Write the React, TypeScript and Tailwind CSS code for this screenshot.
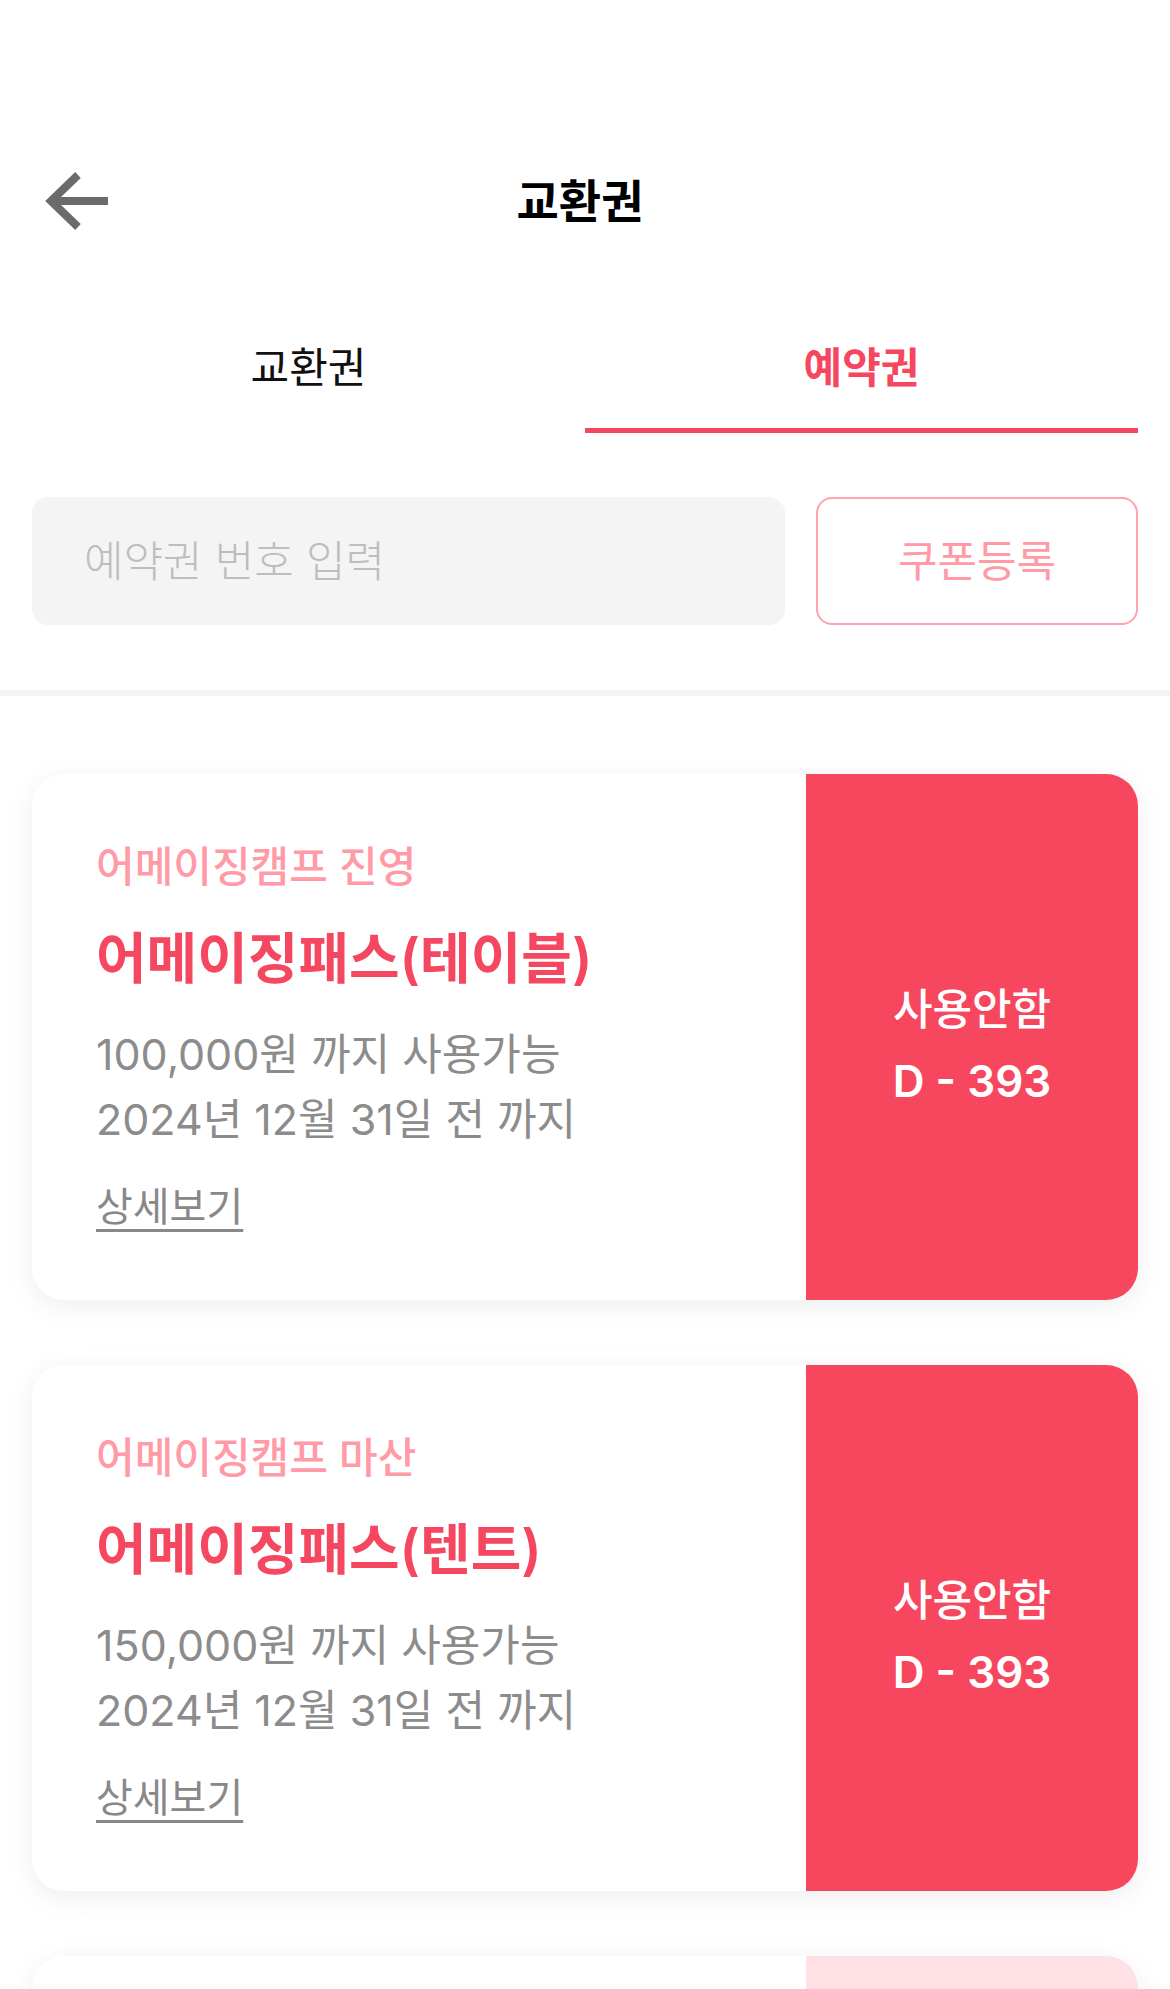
import React from "react";

const FONT = '"Inter", "Noto Sans CJK KR", "Noto Sans", sans-serif';

type Voucher = {
  place: string;
  name: string;
  amount: string;
  until: string;
  status: string;
  dday: string;
  faded?: boolean;
};

const vouchers: Voucher[] = [
  {
    place: "어메이징캠프 진영",
    name: "어메이징패스(테이블)",
    amount: "100,000원 까지 사용가능",
    until: "2024년 12월 31일 전 까지",
    status: "사용안함",
    dday: "D - 393",
  },
  {
    place: "어메이징캠프 마산",
    name: "어메이징패스(텐트)",
    amount: "150,000원 까지 사용가능",
    until: "2024년 12월 31일 전 까지",
    status: "사용안함",
    dday: "D - 393",
  },
];

function VoucherCard({ v }: { v: Voucher }) {
  return (
    <div className="flex h-[526px] shrink-0 overflow-hidden rounded-[32px] bg-white shadow-[0_6px_28px_rgba(0,0,0,0.07)]">
      <div className="flex flex-1 flex-col pl-[64px] pt-[69px]">
        <div className="text-[42px] leading-[48px] font-medium text-[#ff9aa6]">{v.place}</div>
        <div className="mt-[37px] text-[55px] leading-[60px] font-semibold text-[#f5475f]">{v.name}</div>
        <div className="mt-[34px] text-[43px] leading-[65px] text-[#8c8c8c]">
          <div>{v.amount}</div>
          <div>{v.until}</div>
        </div>
        <div className="mt-[31px] text-[40px] leading-[48px] text-[#888888] underline decoration-[3px] underline-offset-[8px]">
          상세보기
        </div>
      </div>
      <div className="flex w-[332px] flex-col items-center justify-center bg-[#f6475f] pt-[16px] text-white">
        <div className="text-[43px] leading-[72px] font-medium">{v.status}</div>
        <div className="text-[44px] leading-[72px] font-semibold">{v.dday}</div>
      </div>
    </div>
  );
}

function FadedCard() {
  return (
    <div className="flex h-[526px] shrink-0 overflow-hidden rounded-[32px] bg-white shadow-[0_6px_28px_rgba(0,0,0,0.07)]">
      <div className="flex-1" />
      <div className="w-[332px] bg-[#ffe1e5]" />
    </div>
  );
}

export default function App() {
  return (
    <div className="h-[1989px] w-full overflow-hidden bg-white" style={{ fontFamily: FONT }}>
      <div className="h-[132px]" />
      <div className="grid h-[138px] grid-cols-[1fr_auto_1fr] items-center">
        <div className="pl-[44px]">
          <svg width="66" height="60" viewBox="0 0 66 60" fill="none">
            <path d="M64 30H8" stroke="#6b6b6b" strokeWidth="8" />
            <path d="M34 4L7 30L34 56" stroke="#6b6b6b" strokeWidth="8" strokeLinejoin="miter" />
          </svg>
        </div>
        <div className="mr-[10px] text-[46px] leading-[50px] font-bold text-black">교환권</div>
        <div />
      </div>

      <div className="mx-[32px] flex h-[163px]">
        <div className="flex flex-1 flex-col items-center justify-end">
          <span className="text-[42px] leading-[42px] text-[#111111]">교환권</span>
          <div className="mt-[39px] h-[5px] w-full bg-transparent" />
        </div>
        <div className="flex flex-1 flex-col items-center justify-end">
          <span className="text-[42px] leading-[42px] font-semibold text-[#f5475f]">예약권</span>
          <div className="mt-[39px] h-[5px] w-full bg-[#f5475f]" />
        </div>
      </div>

      <div className="mx-[32px] mt-[64px] flex h-[128px] gap-[31px]">
        <div className="flex flex-1 items-center rounded-[16px] bg-[#f4f4f4] pl-[52px]">
          <span className="text-[43px] leading-[43px] font-light text-[#bdbdbd]">예약권 번호 입력</span>
        </div>
        <button className="flex w-[322px] items-center justify-center rounded-[16px] border-[2px] border-[#ffa3ae] bg-white">
          <span className="text-[43px] leading-[43px] text-[#ff9aa6]">쿠폰등록</span>
        </button>
      </div>

      <div className="mt-[65px] h-[6px] w-full bg-[#f3f3f3]" />

      <div className="flex flex-col gap-[65px] px-[32px] pt-[78px]">
        {vouchers.map((v, i) => (
          <VoucherCard key={i} v={v} />
        ))}
        <FadedCard />
      </div>
    </div>
  );
}
